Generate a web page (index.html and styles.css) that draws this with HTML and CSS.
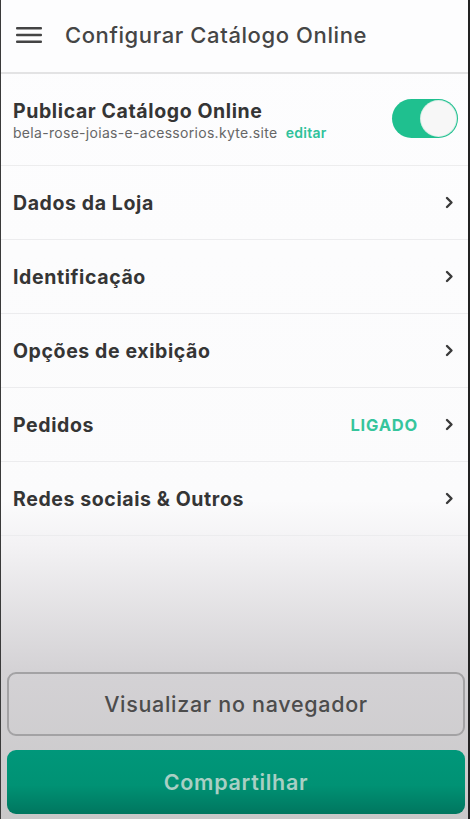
FILE: index.html
```html
<!DOCTYPE html>
<html lang="pt">
<head>
<meta charset="utf-8">
<title>Configurar Catálogo Online</title>
<link rel="stylesheet" href="styles.css">
</head>
<body>
<div class="screen">
  <header class="topbar">
    <svg class="menu" width="26" height="18" viewBox="0 0 26 18"><rect x="0" y="1" width="26" height="2.6" rx="1" fill="#444"/><rect x="0" y="7.7" width="26" height="2.6" rx="1" fill="#444"/><rect x="0" y="14.4" width="26" height="2.6" rx="1" fill="#444"/></svg>
    <h1 class="title">Configurar Catálogo Online</h1>
  </header>
  <div class="publish">
    <div class="publish-text">
      <div class="row-label">Publicar Catálogo Online</div>
      <div class="url">bela-rose-joias-e-acessorios.kyte.site <span class="edit">editar</span></div>
    </div>
    <div class="toggle"><div class="knob"></div></div>
  </div>
  <div class="row"><span class="row-label">Dados da Loja</span><svg class="chev" width="9" height="13" viewBox="0 0 9 13"><path d="M2 2l4.5 4.5L2 11" fill="none" stroke="#3a3a3a" stroke-width="2.4" stroke-linecap="round" stroke-linejoin="round"/></svg></div>
  <div class="row"><span class="row-label">Identificação</span><svg class="chev" width="9" height="13" viewBox="0 0 9 13"><path d="M2 2l4.5 4.5L2 11" fill="none" stroke="#3a3a3a" stroke-width="2.4" stroke-linecap="round" stroke-linejoin="round"/></svg></div>
  <div class="row"><span class="row-label">Opções de exibição</span><svg class="chev" width="9" height="13" viewBox="0 0 9 13"><path d="M2 2l4.5 4.5L2 11" fill="none" stroke="#3a3a3a" stroke-width="2.4" stroke-linecap="round" stroke-linejoin="round"/></svg></div>
  <div class="row"><span class="row-label">Pedidos</span><span class="status">LIGADO</span><svg class="chev" width="9" height="13" viewBox="0 0 9 13"><path d="M2 2l4.5 4.5L2 11" fill="none" stroke="#3a3a3a" stroke-width="2.4" stroke-linecap="round" stroke-linejoin="round"/></svg></div>
  <div class="row"><span class="row-label">Redes sociais &amp; Outros</span><svg class="chev" width="9" height="13" viewBox="0 0 9 13"><path d="M2 2l4.5 4.5L2 11" fill="none" stroke="#3a3a3a" stroke-width="2.4" stroke-linecap="round" stroke-linejoin="round"/></svg></div>
  <div class="spacer"></div>
  <footer class="actions">
    <button class="btn btn-outline">Visualizar no navegador</button>
    <button class="btn btn-primary">Compartilhar</button>
  </footer>
</div>
</body>
</html>
```
FILE: styles.css
```css
* { box-sizing: border-box; }
html, body { margin: 0; padding: 0; }
body {
  width: 470px;
  height: 819px;
  overflow: hidden;
  font-family: Inter, "Open Sans", "Liberation Sans", sans-serif;
  color: #333;
}
.screen {
  height: 819px;
  display: flex;
  flex-direction: column;
  border-left: 1px solid #3a3a3a;
  border-right: 2px solid #222;
  background: linear-gradient(to bottom, #fdfdfe 0px, #fbfbfc 500px, #f3f2f4 545px, #d4d2d5 670px, #c9c8c9 819px);
}
.topbar {
  height: 74px;
  flex: none;
  display: flex;
  align-items: center;
  padding: 0 0 2px 15px;
  border-bottom: 2px solid #e3e3e4;
  background: #fdfdfe;
}
.menu { flex: none; }
.title {
  margin: 0 0 0 23px;
  font-size: 22px;
  font-weight: 500;
  color: #454545;
  letter-spacing: 0.6px;
}
.publish {
  height: 92px;
  flex: none;
  display: flex;
  align-items: center;
  justify-content: space-between;
  padding: 0 10px 0 12px;
  border-bottom: 1px solid #ededee;
}
.publish-text { display: flex; flex-direction: column; padding-top: 2px; }
.row-label {
  font-size: 19.5px;
  font-weight: 700;
  color: #353535;
  line-height: 24px;
  letter-spacing: 0.6px;
}
.url {
  font-size: 14px;
  color: #666;
  line-height: 20px;
  letter-spacing: 0.3px;
}
.edit { color: #2fc29b; font-weight: 600; margin-left: 4px; }
.toggle {
  width: 66px;
  height: 39px;
  border-radius: 20px;
  background: #1fc08f;
  display: flex;
  align-items: center;
  justify-content: flex-end;
  padding-right: 2px;
  margin-top: -2px;
}
.knob {
  width: 35px;
  height: 35px;
  border-radius: 50%;
  background: #f7f7f7;
  box-shadow: 0 0 0 1px #d8eee6;
}
.row {
  height: 74px;
  flex: none;
  display: flex;
  align-items: center;
  padding: 0 14px 0 12px;
  border-bottom: 1px solid #ececee;
}
.row .row-label { flex: 1; }
.status {
  font-size: 16.5px;
  font-weight: 700;
  color: #36c59c;
  margin-right: 27px;
  letter-spacing: 0.8px;
}
.chev { flex: none; }
.spacer { flex: 1; }
.actions {
  display: flex;
  flex-direction: column;
  gap: 14px;
  padding: 0 3px 5px 6px;
}
.btn {
  font-family: Inter, "Open Sans", "Liberation Sans", sans-serif;
  width: 100%;
  height: 64px;
  border-radius: 9px;
  font-size: 21.5px;
  font-weight: 500;
  letter-spacing: 0.7px;
  cursor: pointer;
}
.btn-outline {
  background: transparent;
  border: 2px solid #a3a2a4;
  color: #4c4c4c;
}
.btn-primary {
  border: none;
  background: linear-gradient(to bottom, #00977a 0%, #009274 55%, #00765f 100%);
  color: #a9cfc4;
  font-weight: 600;
}
```
